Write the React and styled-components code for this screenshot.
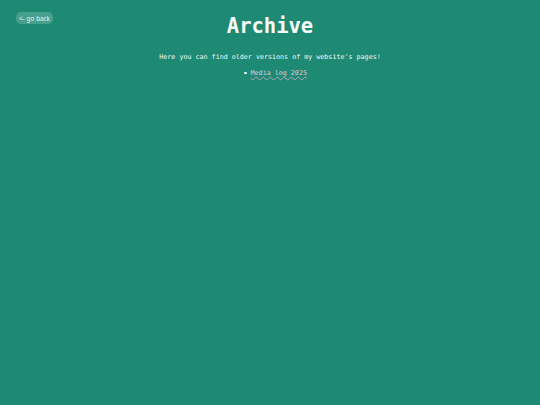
import React from "react";
import styled, { createGlobalStyle } from "styled-components";

const Global = createGlobalStyle`
  html, body { margin: 0; padding: 0; background: #1f8a74; }
  body { min-height: 405px; }
`;

const Page = styled.div`
  min-height: 405px;
  background: #1f8a74;
  color: #f1f7f4;
  font-family: "DejaVu Sans Mono", "Liberation Mono", monospace;
  padding: 12px 16px;
  box-sizing: border-box;
`;

const Header = styled.header`
  display: grid;
  grid-template-columns: 1fr auto 1fr;
  align-items: start;
`;

const BackButton = styled.a`
  justify-self: start;
  display: inline-flex;
  align-items: center;
  height: 12px;
  padding: 0 3px;
  border-radius: 5px;
  background: rgba(255, 255, 255, 0.18);
  color: #e9f4f0;
  font-family: "Noto Sans", "DejaVu Sans", sans-serif;
  font-size: 6.3px;
  word-spacing: 0.3px;
  text-decoration: none;
  white-space: nowrap;
`;

const Title = styled.h1`
  grid-column: 2;
  margin: 0;
  margin-top: 1px;
  font-size: 20.5px;
  line-height: 26px;
  font-weight: 700;
  color: #f7fbf9;
`;

const Main = styled.main`
  display: flex;
  flex-direction: column;
  align-items: center;
  font-size: 6.7px;
  line-height: 10px;
`;

const Intro = styled.p`
  margin: 13px 0 0 0;
`;

const List = styled.ul`
  margin: 6px 0 0 0;
  padding: 0 0 0 11px;
  list-style: none;
`;

const Item = styled.li`
  display: flex;
  align-items: center;
  gap: 4px;
  &::before {
    content: "";
    width: 2.5px;
    height: 2.5px;
    border-radius: 50%;
    background: #f1f7f4;
  }
`;

const Link = styled.a`
  color: #d9cbe2;
  text-decoration: underline wavy rgba(226, 170, 210, 0.75);
  text-decoration-thickness: 0.5px;
  text-underline-offset: 1px;
`;

export default function App() {
  return (
    <>
      <Global />
      <Page>
        <Header>
          <BackButton href="#">&lt;- go back</BackButton>
          <Title>Archive</Title>
        </Header>
        <Main>
          <Intro>Here you can find older versions of my website's pages!</Intro>
          <List>
            <Item>
              <Link href="#">Media log 2025</Link>
            </Item>
          </List>
        </Main>
      </Page>
    </>
  );
}
